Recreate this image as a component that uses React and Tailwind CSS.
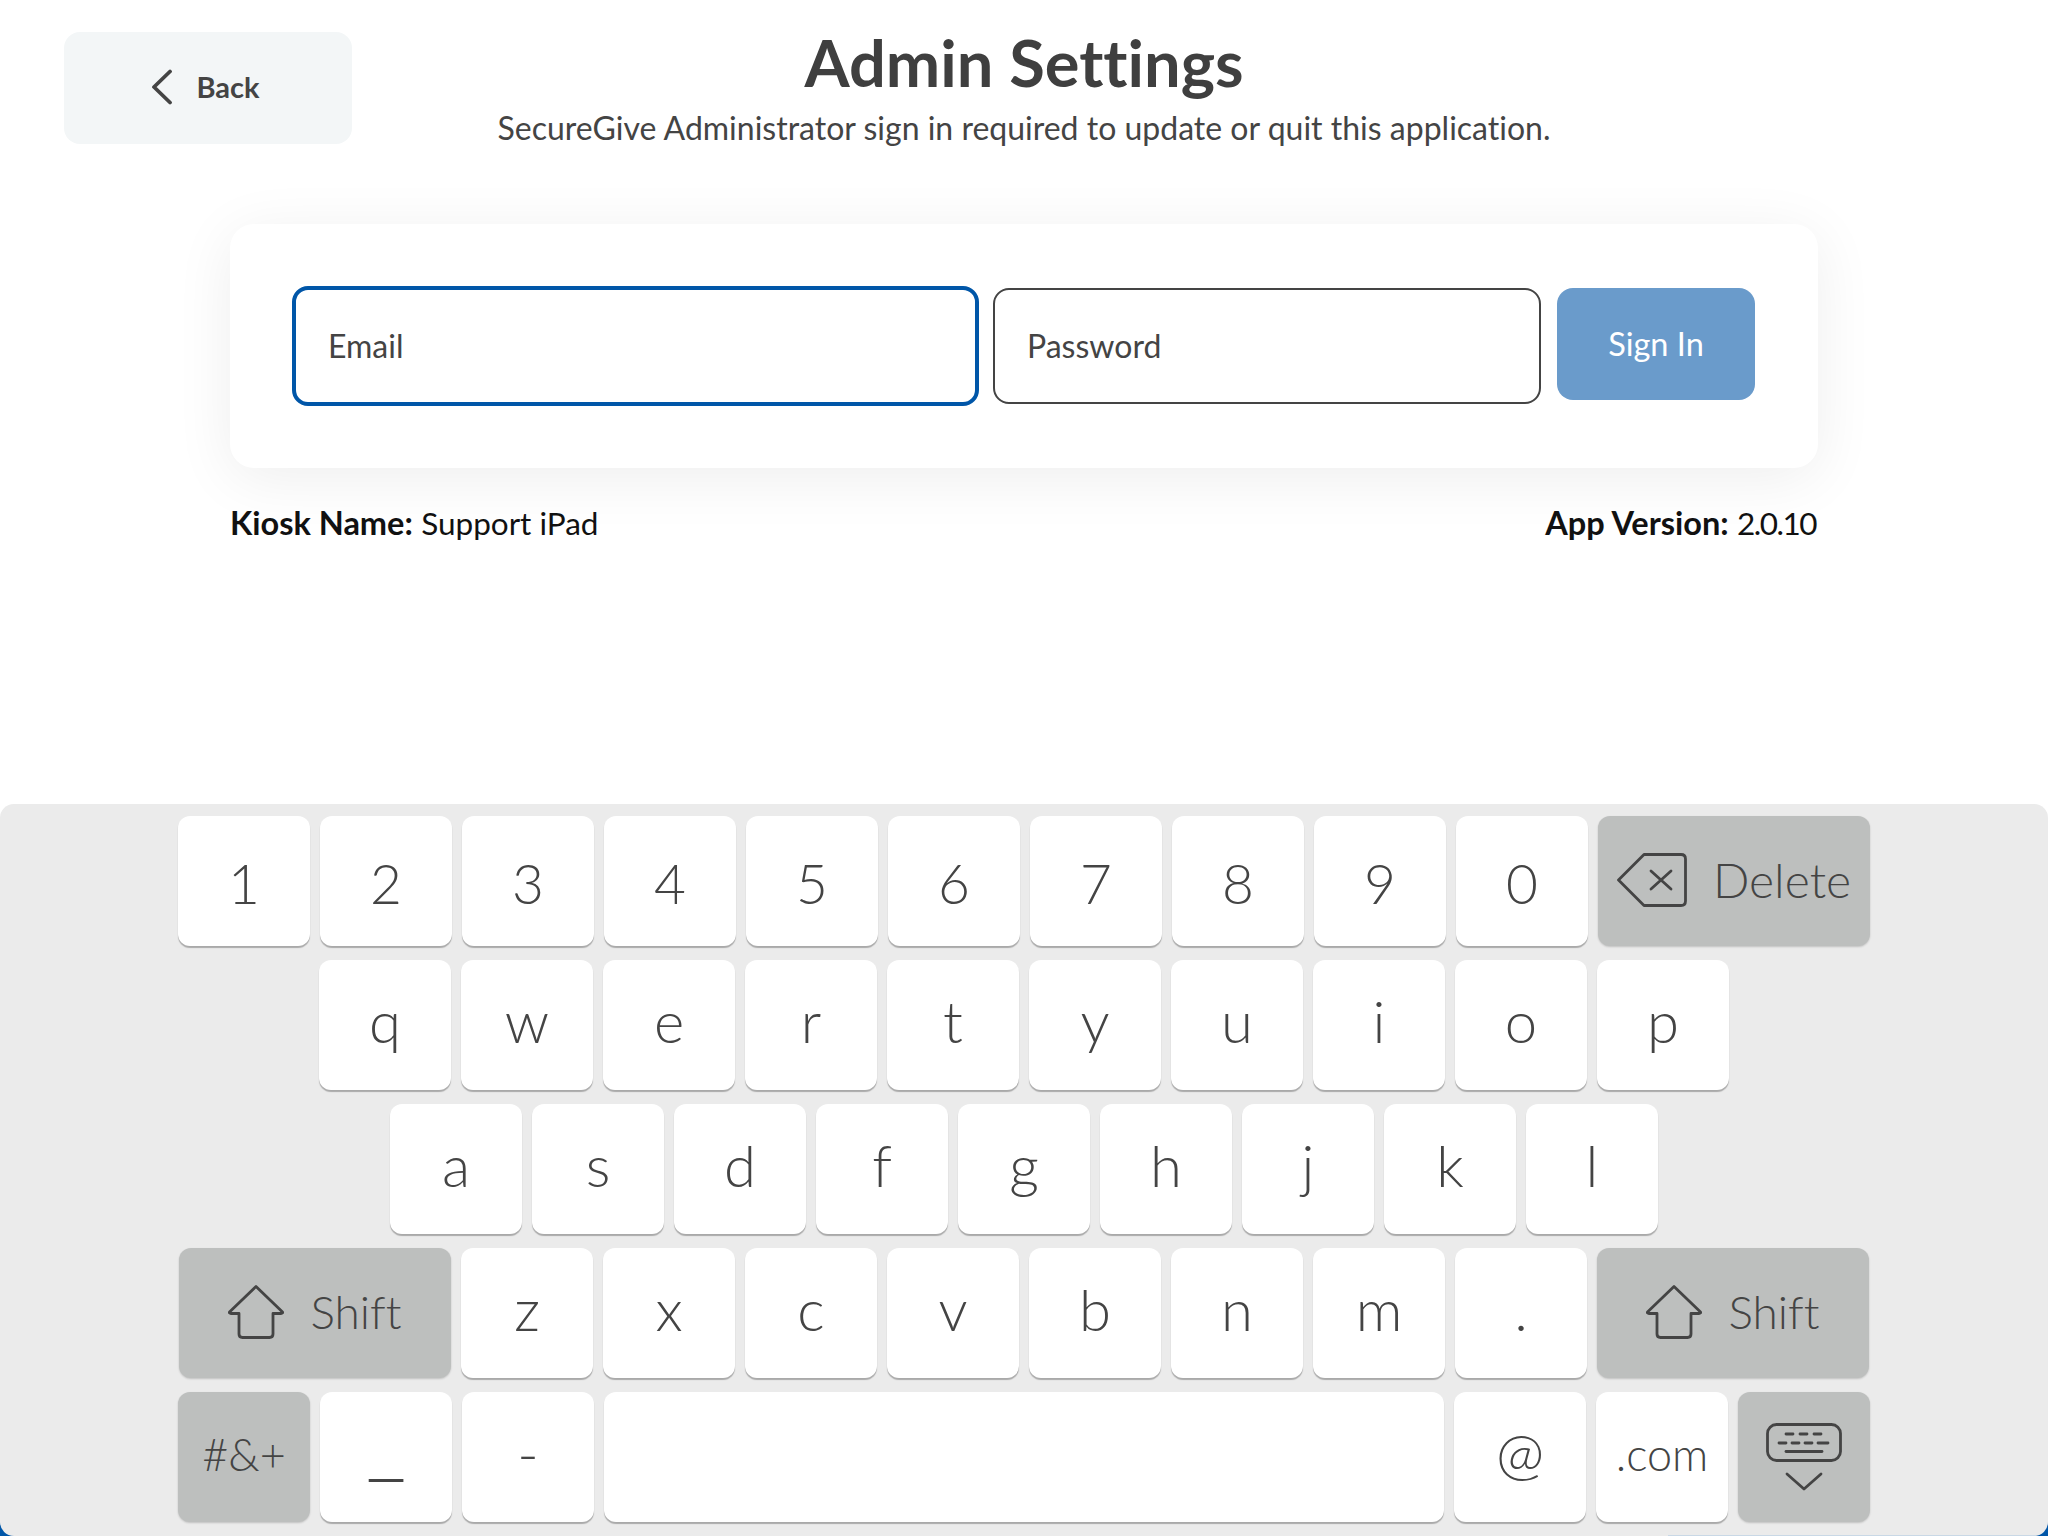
import React from "react";

const INK = "#444444";

function Chevron() {
  return (
    <svg width="24" height="36" viewBox="0 0 24 36" fill="none" stroke={INK} strokeWidth="3.8" strokeLinecap="round" strokeLinejoin="round">
      <path d="M20 2.500 L4 18 L20 33.500" />
    </svg>
  );
}

function BackspaceIcon() {
  return (
    <svg width="70" height="54" viewBox="0 0 70 54" fill="none" stroke={INK} strokeWidth="2.8" strokeLinecap="round" strokeLinejoin="round">
      <path d="M1.500 27 L27 1.500 H64 Q68.500 1.500 68.500 6 V48 Q68.500 52.500 64 52.500 H27 Z" />
      <path d="M34 18 L54 36 M54 18 L34 36" />
    </svg>
  );
}

function ShiftIcon() {
  return (
    <svg width="56" height="54" viewBox="0 0 56 54" fill="none" stroke={INK} strokeWidth="2.800" strokeLinecap="round" strokeLinejoin="round">
      <path d="M28 1.500 L54.500 27 Q55 28.500 53 28.500 H45 V49 Q45 52.500 41.500 52.500 H14.500 Q11 52.500 11 49 V28.500 H3 Q1 28.500 1.500 27 Z" />
    </svg>
  );
}

function HideKeyboardIcon() {
  return (
    <svg width="76" height="68" viewBox="0 0 76 68" fill="none" stroke={INK} strokeWidth="2.800" strokeLinecap="round" strokeLinejoin="round">
      <rect x="1.500" y="1.500" width="73" height="36" rx="9" />
      <path d="M20 11 H27 M34 11 H41 M48 11 H55" />
      <path d="M13 20 H20 M26 20 H33 M39 20 H46 M52 20 H62" />
      <path d="M20 28.500 H56" />
      <path d="M21 51 L38 66 L55 51" />
    </svg>
  );
}

function Key({ children, gray, wide, className = "" }) {
  return (
    <button
      type="button"
      className={
        "flex h-[130px] shrink-0 items-center justify-center rounded-[12px] text-[#444444] " +
        (gray ? "bg-[#bdbfbe] shadow-[0_1px_2px_rgba(0,0,0,0.18)] " : "bg-white shadow-[0_2px_1px_rgba(0,0,0,0.28)] ") +
        (wide ? "" : "w-[132px] ") +
        className
      }
    >
      {children}
    </button>
  );
}

function Row({ chars, className }) {
  return chars.split("").map((c) => (
    <Key key={c} className={className}>
      {c}
    </Key>
  ));
}

const LETTER = "pb-[10px] text-[58px] font-light";
const DIGIT = "pt-[4px] text-[55px] font-light";
const SPECIAL = "pb-[4px] text-[45px] font-light";
const SHIFT_KEY = "w-[272px] gap-[26px] pb-[3px] text-[46px] font-light";
const DELETE_KEY = "w-[272px] gap-[26px] pb-[3px] text-[48px] font-light";

export default function App() {
  return (
    <div className="flex h-[1536px] w-[2048px] flex-col overflow-hidden bg-white font-['Lato',sans-serif] [font-variant-ligatures:none]">
      <header className="grid grid-cols-[288px_1fr_288px] px-[64px] pt-[32px]">
        <button type="button" className="flex h-[112px] items-center justify-center gap-[22px] rounded-[16px] bg-[#f3f6f7] pr-[6px] pb-[2px]">
          <Chevron />
          <span className="text-[29px] font-bold text-[#444444]">Back</span>
        </button>
        <div className="flex flex-col items-center">
          <h1 className="-mt-[2px] text-[65px] leading-[64px] font-bold text-[#3f3f3f]">Admin Settings</h1>
          <p className="mt-[16px] text-[32px] leading-[36px] font-normal text-[#444444]">
            SecureGive Administrator sign in required to update or quit this application.
          </p>
        </div>
        <div />
      </header>

      <main className="mt-[78px] ml-[230px] flex w-[1588px] flex-col">
        <section className="flex h-[244px] items-start rounded-[24px] bg-white p-[64px] shadow-[0_10px_60px_rgba(0,0,0,0.07)]">
          <div className="-mt-[2px] -ml-[2px] flex h-[120px] w-[687px] shrink-0 items-center rounded-[16px] border-4 border-[#0056a8] pl-[32px] text-[32px] font-normal text-[#444444]">
            Email
          </div>
          <div className="ml-[14px] flex h-[116px] w-[548px] shrink-0 items-center rounded-[16px] border-2 border-[#444444] pl-[32px] text-[32px] font-normal text-[#444444]">
            Password
          </div>
          <button type="button" className="ml-[16px] h-[112px] w-[198px] shrink-0 rounded-[16px] bg-[#6a9bcb] text-[32.5px] text-white">
            Sign In
          </button>
        </section>
        <div className="mt-[37px] flex justify-between pr-[2px] text-[32.5px] leading-[36px] text-[#111111]">
          <p>
            <b>Kiosk Name:</b> <span className="text-[31.5px] font-normal">Support iPad</span>
          </p>
          <p>
            <b>App Version:</b> <span className="text-[31.5px] font-normal tracking-[-1.5px]">2.0.10</span>
          </p>
        </div>
      </main>

      <div className="relative mt-auto h-[732px]">
        <div className="absolute inset-x-0 bottom-0 h-[30px] bg-[#0056a8]" />
        <section className="relative flex h-full flex-col items-center gap-[14px] rounded-[14px] bg-[#ebebeb] pt-[12px]">
          <div className="flex gap-[10px]">
            <Row chars="1234567890" className={DIGIT} />
            <Key gray wide className={DELETE_KEY}>
              <BackspaceIcon />
              <span>Delete</span>
            </Key>
          </div>
          <div className="flex gap-[10px]">
            <Row chars="qwertyuiop" className={LETTER} />
          </div>
          <div className="flex gap-[10px]">
            <Row chars="asdfghjkl" className={LETTER} />
          </div>
          <div className="flex gap-[10px]">
            <Key gray wide className={SHIFT_KEY}>
              <ShiftIcon />
              <span>Shift</span>
            </Key>
            <Row chars="zxcvbnm." className={LETTER} />
            <Key gray wide className={SHIFT_KEY}>
              <ShiftIcon />
              <span>Shift</span>
            </Key>
          </div>
          <div className="flex gap-[10px]">
            <Key gray className={SPECIAL}>#&amp;+</Key>
            <Key className="pb-[42px] text-[88px] font-light">_</Key>
            <Key className={LETTER}>-</Key>
            <Key wide className="w-[840px]" />
            <Key className="pb-[12px] text-[58px] font-light">@</Key>
            <Key className={SPECIAL}>.com</Key>
            <Key gray>
              <HideKeyboardIcon />
            </Key>
          </div>
        </section>
        <div className="absolute right-[12px] bottom-0 h-px w-[368px] bg-[#c9d8e6]" />
      </div>
    </div>
  );
}
